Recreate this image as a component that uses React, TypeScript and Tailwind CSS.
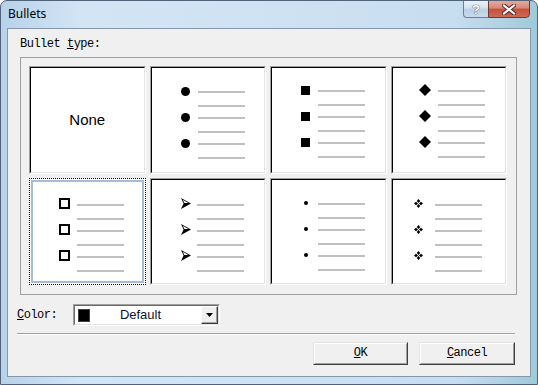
import React from "react";

type Kind = "disc" | "square" | "diamond" | "hollow" | "arrow" | "dot" | "four";

function Glyph({ kind }: { kind: Kind }) {
  switch (kind) {
    case "disc":
      return <div className="w-[9px] h-[9px] shrink-0 rounded-full bg-black" />;
    case "square":
      return <div className="w-[9px] h-[9px] shrink-0 bg-black" />;
    case "diamond":
      return (
        <svg width="12" height="12" viewBox="0 0 12 12" className="shrink-0">
          <polygon points="6,0 12,6 6,12 0,6" fill="#000" />
        </svg>
      );
    case "hollow":
      return <div className="w-[11px] h-[11px] shrink-0 border-2 border-black" />;
    case "arrow":
      return (
        <svg width="10" height="11" viewBox="0 0 10 11" className="shrink-0">
          <polygon points="0,0 10,5.5 0,11 2.6,5.5" fill="#000" />
          <polygon points="1.8,1.8 7.4,5 3.4,5" fill="#fff" />
        </svg>
      );
    case "dot":
      return <div className="w-[4px] h-[4px] shrink-0 rounded-full bg-black" />;
    case "four":
      return (
        <svg width="9" height="9" viewBox="0 0 9 9" className="shrink-0">
          <polygon points="4.5,0 6.3,2 4.5,4 2.7,2" fill="#000" />
          <polygon points="4.5,5 6.3,7 4.5,9 2.7,7" fill="#000" />
          <polygon points="0,4.5 2,2.7 4,4.5 2,6.3" fill="#000" />
          <polygon points="5,4.5 7,2.7 9,4.5 7,6.3" fill="#000" />
        </svg>
      );
  }
}

function Preview({ kind, a, b, pt }: { kind: Kind; a: string; b: string; pt: string }) {
  return (
    <div className={`flex flex-col ${pt}`}>
      {[0, 1, 2].map((i) => (
        <div key={i} className="flex h-[26px] items-start">
          <div className={`shrink-0 ${a}`} />
          <div className="flex h-[2px] w-[12px] shrink-0 -translate-y-[1px] items-center justify-center">
            <Glyph kind={kind} />
          </div>
          <div className={`shrink-0 ${b}`} />
          <div className="flex w-[47px] flex-col gap-[12px]">
            <div className="h-[2px] bg-[#c0c0c0]" />
            <div className="h-[2px] bg-[#c0c0c0]" />
          </div>
        </div>
      ))}
    </div>
  );
}

function Cell({ children, selected }: { children: React.ReactNode; selected?: boolean }) {
  if (selected) {
    return (
      <div className="border border-dotted border-black bg-white p-[1px]">
        <div className="h-full border-2 border-[#a5bcd8] bg-white">{children}</div>
      </div>
    );
  }
  return (
    <div className="border border-t-[#a0a0a0] border-l-[#a0a0a0] border-r-white border-b-white">
      <div className="h-full border border-t-black border-l-black border-r-[#e3e3e3] border-b-[#e3e3e3] bg-white">
        {children}
      </div>
    </div>
  );
}

const mono = "font-['Liberation_Mono','Courier_New',monospace] text-[12px] tracking-[-0.5px] text-black";

function Button({ w, children }: { w: string; children: React.ReactNode }) {
  return (
    <div
      className={`${w} h-[23px] border border-t-[#e3e3e3] border-l-[#e3e3e3] border-r-[#404040] border-b-[#404040] bg-[#f0f0f0]`}
    >
      <div className="flex h-full items-center justify-center border border-t-white border-l-white border-r-[#a0a0a0] border-b-[#a0a0a0]">
        <span className={`${mono} leading-[13px]`}>{children}</span>
      </div>
    </div>
  );
}

export default function App() {
  return (
    <div className="flex h-[385px] w-[538px] flex-col overflow-hidden rounded-t-[7px] border border-[#50637a] bg-[linear-gradient(90deg,#b7d2e9_0%,#d3e5f5_15%,#cfe2f3_50%,#c7ddf0_85%,#9fcad9_100%)]">
      {/* title bar */}
      <div className="flex h-[27px] shrink-0 items-start justify-between pl-[7px]">
        <span className="mt-[5px] font-['Noto_Sans',sans-serif] text-[12px] leading-[16px] text-black">Bullets</span>
        <div className="mr-[7px] -mt-[1px] flex h-[18px]">
          <div className="flex w-[25px] items-center justify-center rounded-bl-[4px] border border-r-0 border-[#6e7f94] bg-[linear-gradient(180deg,#eaf2fa_0%,#d5e2ef_45%,#bccfe3_50%,#c9daec_100%)]">
            <span className="font-['Liberation_Sans',sans-serif] text-[13px] font-bold leading-[13px] text-white [text-shadow:0_0_1px_#3a4a5e,0_0_1px_#3a4a5e]">
              ?
            </span>
          </div>
          <div className="flex w-[42px] items-center justify-center rounded-br-[4px] border border-[#6b3a32] bg-[linear-gradient(180deg,#e6a899_0%,#d88878_45%,#c2503c_50%,#cf6a55_100%)]">
            <svg width="14" height="11" viewBox="0 0 14 11">
              <path d="M2 1.5 L12 9.5 M12 1.5 L2 9.5" stroke="#4a1f18" strokeWidth="4" strokeLinecap="square" />
              <path d="M2 1.5 L12 9.5 M12 1.5 L2 9.5" stroke="#ffffff" strokeWidth="2.2" strokeLinecap="square" />
            </svg>
          </div>
        </div>
      </div>

      {/* client */}
      <div className="mx-[6px] mb-[7px] flex flex-1 flex-col border border-[#8797ab] bg-[#f0f0f0]">
        <div className={`ml-[12px] mt-[9px] leading-[13px] ${mono}`}>
          Bullet <span className="underline">t</span>ype:
        </div>
        <div className="ml-[12px] mt-[6px] h-[238px] w-[497px] border border-[#a0a0a0] pl-[8px] pt-[8px]">
          <div className="grid h-[219px] w-[478px] grid-cols-4 grid-rows-2 gap-1">
            <Cell>
              <div className="flex h-full items-center justify-center font-['Liberation_Sans',Arial,sans-serif] text-[15px] text-black">
                None
              </div>
            </Cell>
            <Cell>
              <Preview kind="disc" a="w-[28px]" b="w-[6px]" pt="pt-[23px]" />
            </Cell>
            <Cell>
              <Preview kind="square" a="w-[27px]" b="w-[7px]" pt="pt-[22px]" />
            </Cell>
            <Cell>
              <Preview kind="diamond" a="w-[26px]" b="w-[7px]" pt="pt-[22px]" />
            </Cell>
            <Cell selected>
              <Preview kind="hollow" a="w-[25px]" b="w-[7px]" pt="pt-[22px]" />
            </Cell>
            <Cell>
              <Preview kind="arrow" a="w-[28px]" b="w-[5px]" pt="pt-[24px]" />
            </Cell>
            <Cell>
              <Preview kind="dot" a="w-[28px]" b="w-[6px]" pt="pt-[23px]" />
            </Cell>
            <Cell>
              <Preview kind="four" a="w-[20px]" b="w-[10px]" pt="pt-[24px]" />
            </Cell>
          </div>
        </div>

        {/* color row */}
        <div className="ml-[9px] mt-[9px] flex h-[22px] items-center">
          <div className={`w-[56px] leading-[13px] ${mono}`}>
            <span className="underline">C</span>olor:
          </div>
          <div className="h-[22px] w-[147px] border border-t-[#a0a0a0] border-l-[#a0a0a0] border-r-white border-b-white">
            <div className="flex h-full items-center border border-t-[#696969] border-l-[#696969] border-r-[#e3e3e3] border-b-[#e3e3e3] bg-white">
              <div className="ml-[3px] h-[13px] w-[12px] shrink-0 border border-[#404040] bg-black" />
              <div className="flex-1 pr-[10px] text-center font-['Liberation_Sans',Arial,sans-serif] text-[13px] leading-[16px] text-[#101030]">
                Default
              </div>
              <div className="h-full w-[17px] shrink-0 border border-t-white border-l-white border-r-[#404040] border-b-[#404040] bg-[#f0f0f0]">
                <div className="flex h-full items-center justify-center border-r border-b border-[#a0a0a0]">
                  <svg width="7" height="4" viewBox="0 0 7 4">
                    <polygon points="0,0 7,0 3.5,4" fill="#000" />
                  </svg>
                </div>
              </div>
            </div>
          </div>
        </div>

        {/* separator */}
        <div className="ml-[9px] mt-[7px] h-[2px] w-[498px] border-t border-b border-t-[#a0a0a0] border-b-white" />

        {/* buttons */}
        <div className="mt-[7px] flex justify-end gap-[11px] pr-[15px]">
          <Button w="w-[95px]">
            <span className="underline">O</span>K
          </Button>
          <Button w="w-[96px]">
            <span className="underline">C</span>ancel
          </Button>
        </div>
      </div>
    </div>
  );
}
